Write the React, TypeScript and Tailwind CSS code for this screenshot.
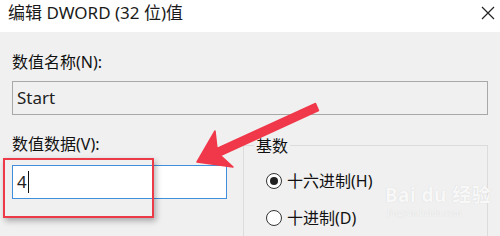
import React from 'react';

const font = { fontFamily: '"Noto Sans", "Noto Sans CJK SC", sans-serif' };

function Radio({ checked, label }: { checked?: boolean; label: string }) {
  return (
    <div className="flex items-center gap-[5px] h-5">
      <span className="w-4 h-4 rounded-full border border-[#333] bg-white flex items-center justify-center">
        {checked && <span className="w-2 h-2 rounded-full bg-[#222]" />}
      </span>
      <span className="text-[16px] leading-5 text-[#111]">{label}</span>
    </div>
  );
}

export default function App() {
  return (
    <div className="relative w-[500px] h-[236px] overflow-hidden bg-[#f0f0f0]" style={font}>
      {/* title bar */}
      <div className="h-8 bg-white flex items-center justify-between pl-2 pr-[5px]">
        <span className="text-[17px] text-[#1a1a1a] -mt-[6px]">编辑 DWORD (32 位)值</span>
        <svg width="14" height="14" viewBox="0 0 14 14" className="-mt-[7px]">
          <path d="M1 1 L13 13 M13 1 L1 13" stroke="#222" strokeWidth="1.2" />
        </svg>
      </div>

      <div className="px-3 pt-5">
        <div className="text-[16px] leading-5 text-[#111]">数值名称(N):</div>
        <div className="mt-[9px] h-[34px] border border-[#a8a8a8] bg-[#f0f0f0] flex items-center px-1 text-[17px] text-[#222]">
          Start
        </div>

        <div className="flex mt-[19px] gap-4">
          <div className="w-[215px] shrink-0">
            <div className="text-[16px] leading-5 text-[#111]">数值数据(V):</div>
            <div className="mt-[11px] h-[34px] border border-[#3f8fdc] bg-white flex items-center px-1 text-[17px] text-[#222]">
              4<span className="inline-block w-px h-[22px] bg-[#111] ml-px" />
            </div>
          </div>
          <div className="relative flex-1 mt-[11px] h-[120px] border border-[#dcdcdc] pl-[22px] pt-[25px]">
            <span className="absolute -top-[10px] left-[10px] px-[2px] bg-[#f0f0f0] text-[16px] leading-5 text-[#111]">基数</span>
            <div className="flex flex-col gap-[17px]">
              <Radio checked label="十六进制(H)" />
              <Radio label="十进制(D)" />
            </div>
          </div>
        </div>
      </div>

      {/* watermark */}
      <div
        className="absolute left-[385px] top-[186px] text-[#f8f8f8] leading-none select-none"
        style={{ textShadow: '0 0 1px #d0d0d0' }}
      >
        <div className="text-[19px] font-bold tracking-wide">Bai du 经验</div>
        <div className="text-[10px] mt-[3px] ml-[2px]" style={{ fontFamily: '"Liberation Serif", serif' }}>jingyan.baidu.com</div>
      </div>

      {/* red highlight box */}
      <div className="absolute left-[3px] top-[158px] w-[151px] h-[60px] border-2 border-[#ec3a48] shadow-[2px_3px_6px_rgba(0,0,0,0.3)]" />

      {/* arrow */}
      <svg className="absolute left-0 top-0" width="500" height="236" viewBox="0 0 500 236">
        <polygon
          points="197,162 233,167 220.5,155.5 318.5,110.5 315.5,103.5 217,148.5 215,131"
          fill="#f0384a"
          stroke="#f0384a"
          strokeWidth="1.5"
          strokeLinejoin="round"
        />
      </svg>
    </div>
  );
}
